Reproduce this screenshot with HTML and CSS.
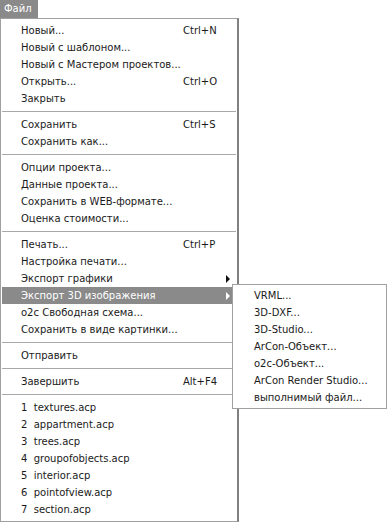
FILE: index.html
```html
<!DOCTYPE html>
<html>
<head>
<meta charset="utf-8">
<link rel="stylesheet" href="styles.css">
</head>
<body>
<div class="menubar"><span class="tab">Файл</span></div>
<div class="menu">
  <div class="item"><span class="label">Новый...</span><span class="key">Ctrl+N</span></div>
  <div class="item"><span class="label">Новый с шаблоном...</span></div>
  <div class="item"><span class="label">Новый с Мастером проектов...</span></div>
  <div class="item"><span class="label">Открыть...</span><span class="key">Ctrl+O</span></div>
  <div class="item"><span class="label">Закрыть</span></div>
  <div class="sep"></div>
  <div class="item"><span class="label">Сохранить</span><span class="key">Ctrl+S</span></div>
  <div class="item"><span class="label">Сохранить как...</span></div>
  <div class="sep"></div>
  <div class="item"><span class="label">Опции проекта...</span></div>
  <div class="item"><span class="label">Данные проекта...</span></div>
  <div class="item"><span class="label">Сохранить в WEB-формате...</span></div>
  <div class="item"><span class="label">Оценка стоимости...</span></div>
  <div class="sep"></div>
  <div class="item"><span class="label">Печать...</span><span class="key">Ctrl+P</span></div>
  <div class="item"><span class="label">Настройка печати...</span></div>
  <div class="item"><span class="label">Экспорт графики</span><span class="arrow"></span></div>
  <div class="item active"><span class="label">Экспорт 3D изображения</span><span class="arrow"></span></div>
  <div class="item"><span class="label">o2c Свободная схема...</span></div>
  <div class="item"><span class="label">Сохранить в виде картинки...</span></div>
  <div class="sep"></div>
  <div class="item"><span class="label">Отправить</span></div>
  <div class="sep"></div>
  <div class="item"><span class="label">Завершить</span><span class="key">Alt+F4</span></div>
  <div class="sep"></div>
  <div class="item"><span class="label">1&nbsp; textures.acp</span></div>
  <div class="item"><span class="label">2&nbsp; appartment.acp</span></div>
  <div class="item"><span class="label">3&nbsp; trees.acp</span></div>
  <div class="item"><span class="label">4&nbsp; groupofobjects.acp</span></div>
  <div class="item"><span class="label">5&nbsp; interior.acp</span></div>
  <div class="item"><span class="label">6&nbsp; pointofview.acp</span></div>
  <div class="item"><span class="label">7&nbsp; section.acp</span></div>
</div>
<div class="submenu">
  <div class="item"><span class="label">VRML...</span></div>
  <div class="item"><span class="label">3D-DXF...</span></div>
  <div class="item"><span class="label">3D-Studio...</span></div>
  <div class="item"><span class="label">ArCon-Объект...</span></div>
  <div class="item"><span class="label">o2c-Объект...</span></div>
  <div class="item"><span class="label">ArCon Render Studio...</span></div>
  <div class="item"><span class="label">выполнимый файл...</span></div>
</div>
</body>
</html>
```

FILE: styles.css
```css
html, body {
  margin: 0;
  padding: 0;
  background: #ffffff;
}
body {
  font-family: "DejaVu Sans", Verdana, sans-serif;
  font-size: 10px;
  color: #1a1a1a;
  width: 391px;
  height: 525px;
  overflow: hidden;
  position: relative;
}
.menubar {
  height: 18px;
  display: flex;
}
.tab {
  background: #8a8a8a;
  color: #ffffff;
  width: 38px;
  height: 18px;
  box-sizing: border-box;
  padding-left: 4px;
  line-height: 17px;
}
.menu {
  width: 239px;
  box-sizing: border-box;
  border: 1px solid #a0a0a0;
  border-right: 2px solid #808080;
  padding: 3px 0;
}
.item {
  height: 17px;
  display: flex;
  align-items: center;
  padding-left: 19px;
  margin: 0 1px;
  white-space: nowrap;
}
.label {
  flex: 1;
}
.key {
  width: 53px;
}
.arrow {
  width: 0;
  height: 0;
  border-top: 4px solid transparent;
  border-bottom: 4px solid transparent;
  border-left: 4px solid #111111;
  margin-right: 6px;
}
.item.active {
  background: #8a8a8a;
  color: #ffffff;
}
.item.active .arrow {
  border-left-color: #ffffff;
}
.sep {
  height: 9px;
  box-sizing: border-box;
  margin: 0 1px;
  padding-top: 4px;
}
.sep::before {
  content: "";
  display: block;
  border-top: 1px solid #a8a8a8;
}
.submenu {
  position: absolute;
  left: 232px;
  top: 284px;
  width: 155px;
  box-sizing: border-box;
  border: 1px solid #a0a0a0;
  background: #ffffff;
  padding: 2px 0;
}
.submenu .item {
  padding-left: 20px;
}
```
